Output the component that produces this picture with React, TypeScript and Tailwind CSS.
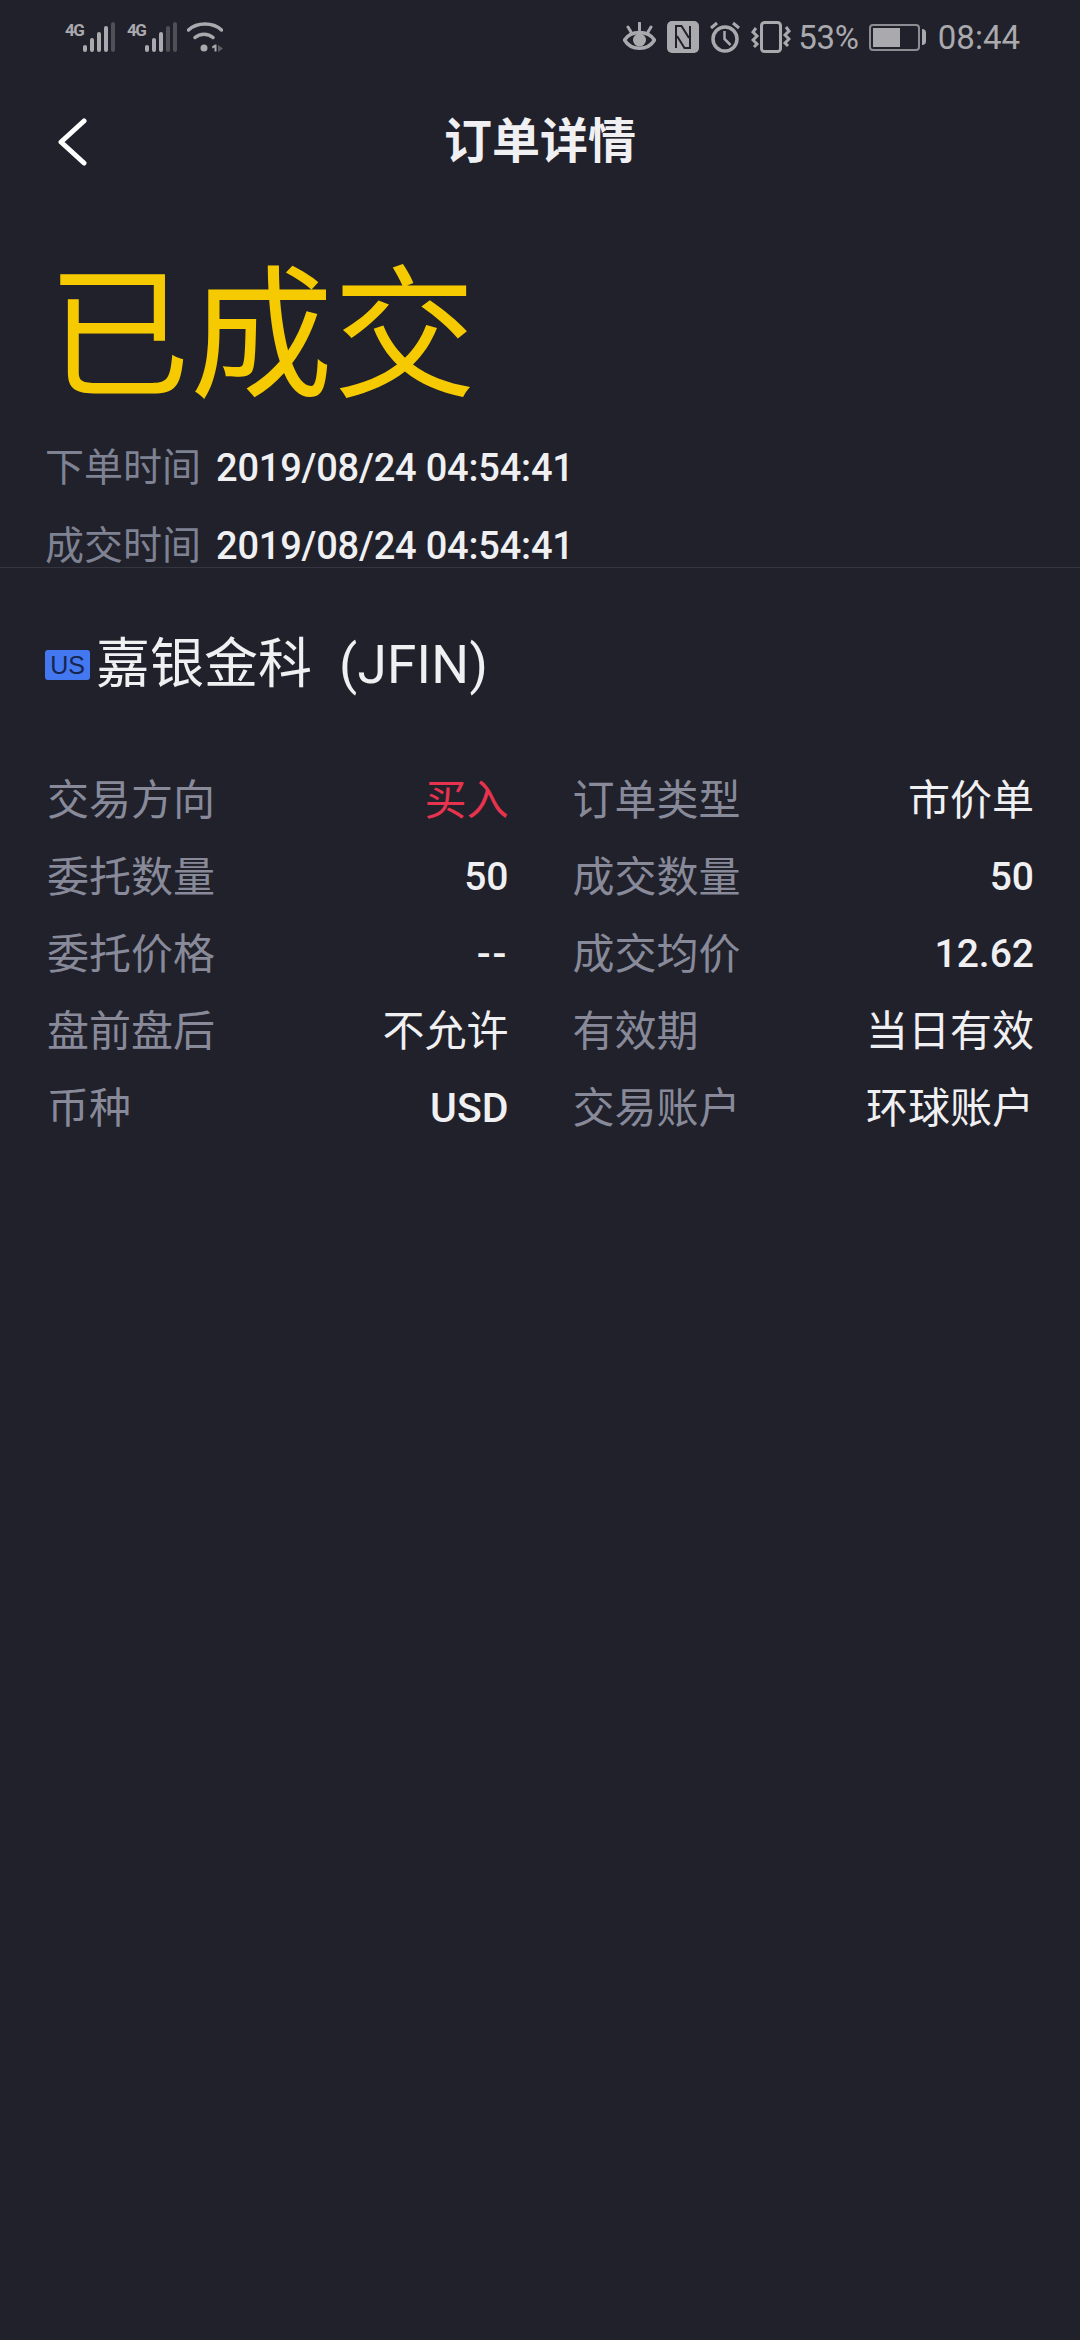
const cjk = "font-['Roboto','Noto_Sans_CJK_SC',sans-serif]";

const plain = "text-[42px] leading-[41px] text-[#f0f0f2]";
const num = "text-[39px] leading-[41px] font-medium text-[#f0f0f2]";

const rows = [
  [
    { label: "交易方向", value: "买入", cls: "text-[42px] leading-[41px] text-[#e8334f]" },
    { label: "订单类型", value: "市价单", cls: plain },
  ],
  [
    { label: "委托数量", value: "50", cls: num },
    { label: "成交数量", value: "50", cls: num },
  ],
  [
    { label: "委托价格", value: "--", cls: "text-[41px] leading-[41px] font-medium tracking-[2px] text-[#f0f0f2]" },
    { label: "成交均价", value: "12.62", cls: num },
  ],
  [
    { label: "盘前盘后", value: "不允许", cls: plain },
    { label: "有效期", value: "当日有效", cls: plain },
  ],
  [
    { label: "币种", value: "USD", cls: "text-[41px] leading-[41px] font-medium text-[#f0f0f2]" },
    { label: "交易账户", value: "环球账户", cls: plain },
  ],
];

function Net({ active }: { active: number }) {
  const heights = [7, 14, 20, 26, 30];
  return (
    <div className="flex h-[30px] items-start">
      <span className="w-[18px] text-[17px] font-bold leading-none tracking-[-1.5px] text-[#a9a9ae]">4G</span>
      <div className="flex h-[30px] items-end gap-[3px]">
        {heights.map((h, i) => (
          <div
            key={h}
            className={i < active ? "w-[4px] rounded-full bg-[#a9a9ae]" : "w-[4px] rounded-full bg-[#4f4f57]"}
            style={{ height: h }}
          />
        ))}
      </div>
    </div>
  );
}

function Wifi() {
  return (
    <svg width="36" height="30" viewBox="0 0 36 30" fill="none">
      <path d="M1.5 8C10 0 26 0 34.5 8" stroke="#a9a9ae" strokeWidth="3.5" strokeLinecap="round" />
      <path d="M8 15.500C13 11 21 11 26 15.500" stroke="#a9a9ae" strokeWidth="3.500" strokeLinecap="round" />
      <circle cx="17" cy="26" r="3.500" fill="#a9a9ae" />
      <path d="M25 24.500l3-2h1.500v7h-2v-4l-2 1z" fill="#a9a9ae" />
      <path d="M31 23l5 3.500-5 3.500z" fill="#5d5d64" />
    </svg>
  );
}

function StatusRight() {
  return (
    <div className="flex items-center">
      <svg width="33" height="30" viewBox="0 0 33 30" fill="none" className="mr-[11px]">
        <path d="M1.500 18C8 8 25 8 31.500 18C25 29 8 29 1.500 18Z" stroke="#a9a9ae" strokeWidth="3.500" />
        <circle cx="16.500" cy="18" r="6.500" fill="#a9a9ae" />
        <path d="M16.500 8V1M8 10L5 5M25 10L28 5" stroke="#a9a9ae" strokeWidth="3" strokeLinecap="round" />
      </svg>
      <svg width="32" height="32" viewBox="0 0 32 32" fill="none" className="mr-[11px]">
        <rect width="32" height="32" rx="5" fill="#a9a9ae" />
        <path d="M9 27V5h5.500L22 17" stroke="#20212b" strokeWidth="2" />
        <path d="M23 5v22h-5.500L10 15" stroke="#20212b" strokeWidth="2" />
      </svg>
      <svg width="30" height="32" viewBox="0 0 30 32" fill="none" className="mr-[11px]">
        <circle cx="15" cy="18" r="12" stroke="#a9a9ae" strokeWidth="3.500" />
        <path d="M14.500 10v8l6 6" stroke="#a9a9ae" strokeWidth="2.500" />
        <path d="M1 7l6-5M29 7l-6-5" stroke="#a9a9ae" strokeWidth="3" />
      </svg>
      <svg width="40" height="32" viewBox="0 0 40 32" fill="none" className="mr-[7px]">
        <rect x="10.500" y="1.500" width="19" height="29" rx="3" stroke="#a9a9ae" strokeWidth="3" />
        <path d="M5 7L2 11l4 4-4 4 4 4-3 3M35 6l3 4-4 4 4 4-4 4 3 3" stroke="#a9a9ae" strokeWidth="3" />
      </svg>
      <span className="mr-[10px] text-[33px] leading-none tracking-[-0.2px] text-[#a9a9ae]">53%</span>
      <div className="flex h-[27px] w-[51px] items-center rounded-[4px] border-2 border-[#8c8c92] p-[2px]">
        <div className="h-full w-[27px] bg-[#a9a9ae]" />
      </div>
      <div className="ml-[2px] mr-[12px] h-[16px] w-[4px] rounded-r-sm bg-[#a9a9ae]" />
      <span className="text-[33px] leading-none text-[#a9a9ae]">08:44</span>
    </div>
  );
}

export default function App() {
  return (
    <div className={`flex h-[2340px] w-[1080px] flex-col bg-[#20212b] ${cjk}`}>
      <div className="flex h-[72px] items-center justify-between pl-[65px] pr-[60px] pt-[2px]">
        <div className="flex items-center">
          <Net active={4} />
          <div className="ml-[12px] mr-[10px]">
            <Net active={3} />
          </div>
          <Wifi />
        </div>
        <StatusRight />
      </div>

      <div className="relative flex h-[138px] items-center justify-center">
        <svg width="32" height="48" viewBox="0 0 32 48" fill="none" className="absolute left-[56px] top-[46px]">
          <path d="M28 3L5 24L28 45" stroke="#fff" strokeWidth="5" strokeLinecap="round" strokeLinejoin="round" />
        </svg>
        <h1 className="mt-[2px] text-[48px] font-bold leading-none text-[#f0f0f2]">订单详情</h1>
      </div>

      <div className="mt-[57px] pl-[47px] text-[143px] leading-[140px] text-[#f6ca00]">已成交</div>

      <div className="mt-[41px] flex flex-col gap-[38px] pl-[45px]">
        <div className="flex items-center">
          <span className="w-[171px] text-[39px] leading-[40px] text-[#7f8293]">下单时间</span>
          <span className="text-[38px] font-medium leading-[40px] tracking-[-0.2px] text-[#f0f0f2]">2019/08/24 04:54:41</span>
        </div>
        <div className="flex items-center">
          <span className="w-[171px] text-[39px] leading-[40px] text-[#7f8293]">成交时间</span>
          <span className="text-[38px] font-medium leading-[40px] tracking-[-0.2px] text-[#f0f0f2]">2019/08/24 04:54:41</span>
        </div>
      </div>

      <div className="mt-px h-px bg-[#34353f]" />

      <div className="mt-[67px] flex items-center pl-[45px]">
        <span className="flex h-[30px] w-[45px] items-center justify-center rounded-[3px] bg-[#4478f0] font-['Liberation_Sans',sans-serif] text-[25px] leading-none text-[#16264f]">
          US
        </span>
        <span className="ml-[6px] text-[54px] leading-[60px] text-[#f0f0f2]">嘉银金科</span>
        <span className="ml-[27px] text-[53px] leading-[60px] tracking-[0.3px] text-[#f0f0f2]">(JFIN)</span>
      </div>

      <div className="mt-[85px] flex flex-col gap-[36px] pl-[47px] pr-[46px]">
        {rows.map((row) => (
          <div key={row[0].label} className="grid grid-cols-2 gap-[64px]">
            {row.map((c) => (
              <div key={c.label} className="flex items-center justify-between">
                <span className="text-[42px] leading-[41px] text-[#888a9a]">{c.label}</span>
                <span className={c.cls}>{c.value}</span>
              </div>
            ))}
          </div>
        ))}
      </div>
    </div>
  );
}
